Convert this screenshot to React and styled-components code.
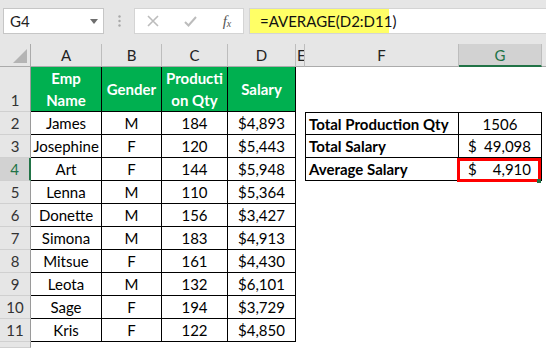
import React from "react";
import styled, { createGlobalStyle } from "styled-components";

const GlobalStyle = createGlobalStyle`
  html, body { margin: 0; padding: 0; background: #ffffff; }
  body { font-family: Lato, "Liberation Sans", sans-serif; overflow: hidden; }
  * { box-sizing: border-box; }
`;

const Page = styled.div`
  width: 546px;
  height: 348px;
  overflow: hidden;
  display: flex;
  flex-direction: column;
  background: #ffffff;
`;

const FormulaBar = styled.div`
  height: 44px;
  flex: none;
  background: #e6e6e6;
  display: flex;
  align-items: flex-start;
  padding: 8px 0 0 3px;
`;

const NameBox = styled.div`
  width: 101px;
  height: 26px;
  background: #fff;
  border: 1px solid #c6c6c6;
  display: flex;
  align-items: center;
  justify-content: space-between;
  padding: 0 5px 0 6px;
  font-size: 15px;
  color: #222;
`;

const Grip = styled.div`
  width: 30px;
  height: 26px;
  display: flex;
  align-items: center;
  justify-content: center;
`;

const FnBox = styled.div`
  width: 110px;
  height: 26px;
  background: #fff;
  border: 1px solid #d4d4d4;
  display: grid;
  grid-template-columns: 36px 38px 36px;
  align-items: center;
  justify-items: center;
`;

const Fx = styled.span`
  font-family: "Liberation Serif", serif;
  font-style: italic;
  font-size: 15px;
  color: #555;
  line-height: 1;
  sub { font-size: 10px; vertical-align: -1px; font-style: italic; }
`;

const InputBox = styled.div`
  flex: 1;
  margin-left: 5px;
  height: 26px;
  background: #fff;
  border: 1px solid #d4d4d4;
  border-right: none;
  display: flex;
`;

const Highlight = styled.div`
  width: 139px;
  height: 100%;
  background: #ffff66;
  padding-left: 10px;
  font-size: 15px;
  line-height: 24px;
  color: #111;
  white-space: nowrap;
`;

const Sheet = styled.div`
  flex: 1;
  display: grid;
  grid-template-columns: 31px 71px 60px 66px 68px 9px 154px 83px 1fr;
  grid-template-rows: 23px 45px repeat(10, 23px) 1fr;
  background: #fff;
  font-size: 15px;
`;

const Corner = styled.div`
  background: #e6e6e6;
  border-right: 1px solid #ababab;
  border-bottom: 1px solid #ababab;
  display: flex;
  align-items: flex-end;
  justify-content: flex-end;
  padding: 0 3px 3px 0;
`;

const ColHead = styled.div`
  background: ${(p) => (p.$selected ? "#d2d2d2" : "#e6e6e6")};
  border-right: 1px solid #bdbdbd;
  border-bottom: ${(p) => (p.$selected ? "2px solid #217346" : "1px solid #ababab")};
  color: ${(p) => (p.$selected ? "#217346" : "#222")};
  display: flex;
  align-items: center;
  justify-content: ${(p) => (p.$left ? "flex-start" : "center")};
  padding-left: ${(p) => (p.$left ? "1px" : "0")};
  line-height: 22px;
  overflow: hidden;
`;

const RowHead = styled.div`
  background: ${(p) => (p.$selected ? "#d2d2d2" : "#e6e6e6")};
  border-right: ${(p) => (p.$selected ? "2px solid #217346" : "1px solid #9a9a9a")};
  border-bottom: 1px solid #d0d0d0;
  color: ${(p) => (p.$selected ? "#217346" : "#333")};
  display: flex;
  align-items: flex-end;
  justify-content: center;
  line-height: 22px;
`;

const Cell = styled.div`
  position: relative;
  display: flex;
  align-items: center;
  justify-content: ${(p) => p.$align || "center"};
  padding: 0 ${(p) => (p.$pad ? "10px 0 9px" : "3px")};
  line-height: 22px;
  color: #000;
  font-weight: ${(p) => (p.$bold ? 700 : 400)};
  white-space: nowrap;
  border-right: ${(p) => (p.$br ? "1px solid #000" : "none")};
  border-bottom: ${(p) => (p.$bb ? "1px solid #000" : "none")};
  border-left: ${(p) => (p.$bl ? "1px solid #000" : "none")};
  border-top: ${(p) => (p.$bt ? "1px solid #000" : "none")};
`;

const HeadCell = styled.div`
  background: #00b050;
  color: #fff;
  font-weight: 700;
  border-right: 1px solid #000;
  border-bottom: 1px solid #000;
  display: flex;
  flex-direction: column;
  align-items: center;
  justify-content: center;
  line-height: 22.5px;
  white-space: nowrap;
`;

const Accounting = styled.div`
  flex: 1;
  display: flex;
  justify-content: space-between;
  padding: 0 10px 0 9px;
`;

const Selection = styled.div`
  position: absolute;
  left: -2px;
  top: 0;
  right: 0;
  bottom: -2px;
  border: 3px solid #ff0000;
  pointer-events: none;
`;

const Handle = styled.div`
  position: absolute;
  right: -3px;
  bottom: -4px;
  width: 4px;
  height: 4px;
  background: #217346;
`;

const cols = ["A", "B", "C", "D", "E", "F", "G"];

const data = [
  ["James", "M", "184", "$4,893"],
  ["Josephine", "F", "120", "$5,443"],
  ["Art", "F", "144", "$5,948"],
  ["Lenna", "M", "110", "$5,364"],
  ["Donette", "M", "156", "$3,427"],
  ["Simona", "M", "183", "$4,913"],
  ["Mitsue", "F", "161", "$4,430"],
  ["Leota", "M", "132", "$6,101"],
  ["Sage", "F", "194", "$3,729"],
  ["Kris", "F", "122", "$4,850"],
];

const summary = [
  ["Total Production Qty", { plain: "1506" }],
  ["Total Salary", { cur: "49,098" }],
  ["Average Salary", { cur: "4,910", selected: true }],
];

function XIcon() {
  return (
    <svg width="12" height="12" viewBox="0 0 12 12">
      <path d="M1 1L11 11M11 1L1 11" stroke="#bcbcbc" strokeWidth="1.6" fill="none" />
    </svg>
  );
}

function CheckIcon() {
  return (
    <svg width="13" height="11" viewBox="0 0 13 11">
      <path d="M1 6L4.5 9.5L12 1" stroke="#bcbcbc" strokeWidth="2" fill="none" />
    </svg>
  );
}

function DropArrow() {
  return (
    <svg width="8" height="5" viewBox="0 0 8 5">
      <path d="M0 0H8L4 5Z" fill="#6e6e6e" />
    </svg>
  );
}

function Dots() {
  return (
    <svg width="3" height="12" viewBox="0 0 3 12">
      <circle cx="1.5" cy="1.5" r="1.2" fill="#a8a8a8" />
      <circle cx="1.5" cy="6" r="1.2" fill="#a8a8a8" />
      <circle cx="1.5" cy="10.5" r="1.2" fill="#a8a8a8" />
    </svg>
  );
}

function CornerTriangle() {
  return (
    <svg width="14" height="14" viewBox="0 0 14 14">
      <path d="M14 0V14H0Z" fill="#b4b4b4" />
    </svg>
  );
}

export default function App() {
  const rows = [];
  // Row 1 (header)
  rows.push(
    <React.Fragment key="r1">
      <RowHead>1</RowHead>
      <HeadCell>
        <span>Emp</span>
        <span>Name</span>
      </HeadCell>
      <HeadCell>
        <span>Gender</span>
      </HeadCell>
      <HeadCell>
        <span>Producti</span>
        <span>on Qty</span>
      </HeadCell>
      <HeadCell>
        <span>Salary</span>
      </HeadCell>
      <Cell />
      <Cell />
      <Cell />
      <Cell />
    </React.Fragment>
  );
  data.forEach((r, i) => {
    const n = i + 2;
    const s = summary[i];
    rows.push(
      <React.Fragment key={n}>
        <RowHead $selected={n === 4}>{n}</RowHead>
        {r.map((v, j) => (
          <Cell key={j} $br $bb>
            {v}
          </Cell>
        ))}
        <Cell />
        {s ? (
          <>
            <Cell $align="flex-start" $bold $bl $br $bb $bt={n === 2}>
              {s[0]}
            </Cell>
            <Cell $br $bb $bt={n === 2} style={{ padding: 0 }}>
              {s[1].plain ? (
                s[1].plain
              ) : (
                <Accounting>
                  <span>$</span>
                  <span>{s[1].cur}</span>
                </Accounting>
              )}
              {s[1].selected && (
                <Selection>
                  <Handle />
                </Selection>
              )}
            </Cell>
          </>
        ) : (
          <>
            <Cell />
            <Cell />
          </>
        )}
        <Cell />
      </React.Fragment>
    );
  });

  return (
    <>
      <GlobalStyle />
      <Page>
        <FormulaBar>
          <NameBox>
            <span>G4</span>
            <DropArrow />
          </NameBox>
          <Grip>
            <Dots />
          </Grip>
          <FnBox>
            <XIcon />
            <CheckIcon />
            <Fx>
              f<sub>x</sub>
            </Fx>
          </FnBox>
          <InputBox>
            <Highlight>=AVERAGE(D2:D11)</Highlight>
          </InputBox>
        </FormulaBar>
        <Sheet>
          <Corner>
            <CornerTriangle />
          </Corner>
          {cols.map((c) => (
            <ColHead key={c} $selected={c === "G"} $left={c === "E"}>
              {c}
            </ColHead>
          ))}
          <ColHead />
          {rows}
          <RowHead />
        </Sheet>
      </Page>
    </>
  );
}
